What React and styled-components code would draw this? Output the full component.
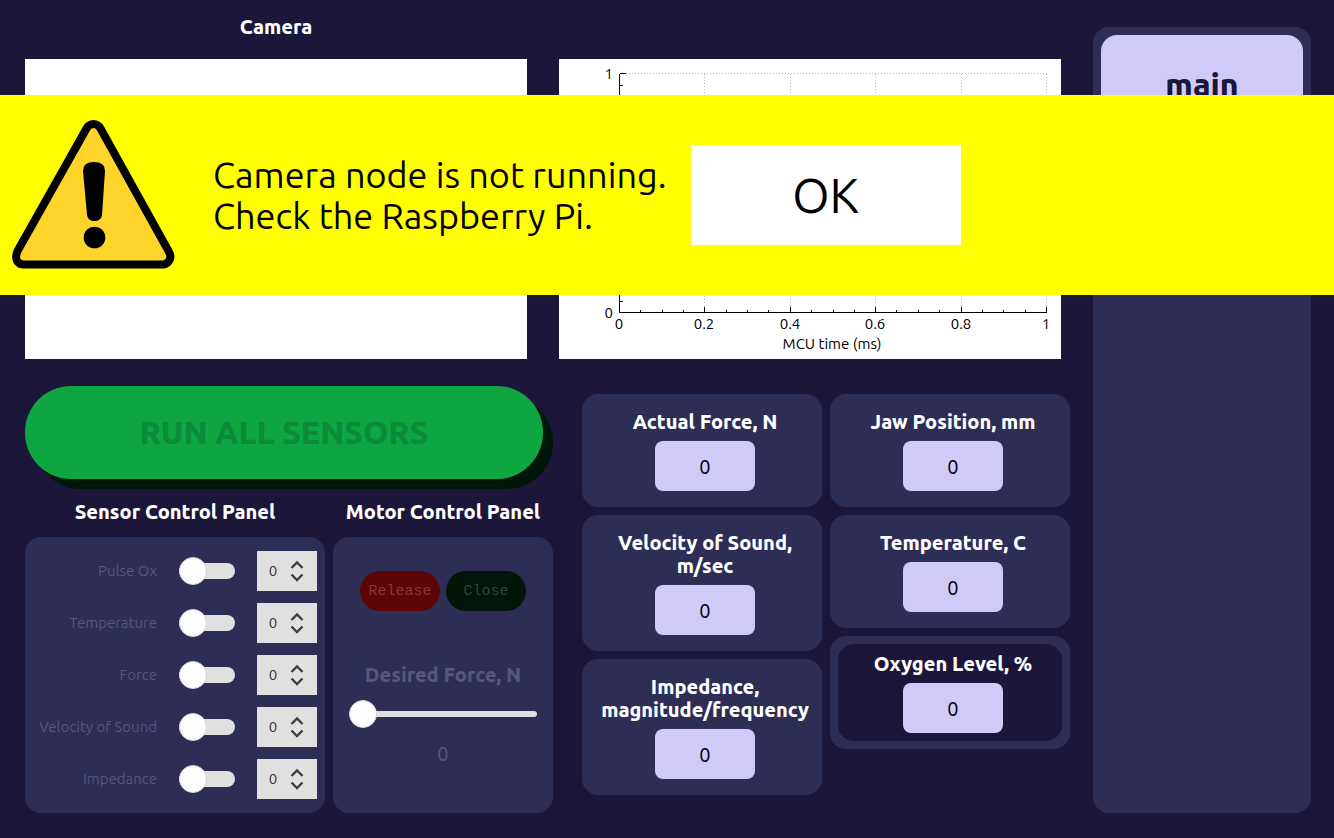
import React from "react";
import styled, { createGlobalStyle } from "styled-components";

const night = "#1c163a";
const panel = "#2e2d56";
const lavender = "#d0caf8";
const muted = "#57567b";
const track = "#e0e0e0";

const regular = 400;
const bold = 800;

const GlobalStyle = createGlobalStyle`
  *, *::before, *::after { box-sizing: border-box; }
  body {
    margin: 0;
    background: ${night};
    color: #fff;
    font-family: "Ubuntu", "Noto Sans", sans-serif;
    font-weight: ${regular};
  }
  button, input, output { font-family: inherit; font-weight: inherit; }
`;

const Page = styled.div`
  position: relative;
  display: flex;
  gap: 23px;
  min-height: 100vh;
  padding: 0 23px 25px 25px;
`;

const Main = styled.main`
  flex: 1;
  min-width: 0;
  padding-top: 15px;
`;

const Views = styled.section`
  display: grid;
  grid-template-columns: 1fr 1fr;
  column-gap: 32px;
  padding-right: 9px;
`;

const View = styled.div`
  display: flex;
  flex-direction: column;
  gap: 21px;
`;

const Heading = styled.h2`
  margin: 0;
  min-height: 23px;
  font-size: 20px;
  line-height: 23px;
  font-weight: ${bold};
  text-align: center;
  color: ${(p) => (p.$muted ? muted : "#fff")};
`;

const Screen = styled.div`
  height: 300px;
  background: #fff;
`;

const Chart = styled.svg`
  display: block;
  width: 100%;
  height: 300px;
  font-size: 15px;
`;

const Lower = styled.section`
  display: grid;
  grid-template-columns: 528fr 488fr;
  column-gap: 29px;
  margin-top: 27px;
`;

const Controls = styled.div`
  display: flex;
  flex-direction: column;
  gap: 21px;
`;

const RunButton = styled.button`
  height: 93px;
  margin-right: 10px;
  padding: 0 0 2px;
  border: 0;
  border-radius: 46px;
  background: #0ea542;
  box-shadow: 10px 10px 0 #001608;
  color: #0b8a3a;
  font-size: 32px;
  font-weight: ${bold};
`;

const Panels = styled.div`
  display: grid;
  grid-template-columns: 300fr 220fr;
  column-gap: 8px;
`;

const PanelColumn = styled.section`
  display: flex;
  flex-direction: column;
  gap: 14px;
`;

const Panel = styled.div`
  display: flex;
  flex-direction: column;
  flex: 1;
  border-radius: 16px;
  background: ${panel};
`;

const SensorPanel = styled(Panel)`
  gap: 12px;
  padding: 14px 8px;
`;

const SensorRow = styled.div`
  display: flex;
  align-items: center;
  gap: 22px;
  height: 40px;
`;

const SensorLabel = styled.label`
  flex: 1;
  font-size: 15px;
  line-height: 20px;
  text-align: right;
  white-space: nowrap;
  color: ${muted};
`;

const Switch = styled.input`
  appearance: none;
  position: relative;
  width: 56px;
  height: 16px;
  margin: 0;
  border-radius: 8px;
  background: ${track};

  &::before {
    content: "";
    position: absolute;
    top: -6px;
    left: 0;
    width: 28px;
    height: 28px;
    border: 1px solid #d4d4d8;
    border-radius: 50%;
    background: #fdfdfd;
  }
`;

const SpinBox = styled.div`
  display: flex;
  width: 60px;
  height: 40px;
  background: ${track};
`;

const SpinInput = styled.input`
  appearance: textfield;
  width: 32px;
  padding: 0 0 2px;
  border: 0;
  background: transparent;
  color: #353637;
  font-size: 15px;
  text-align: center;

  &::-webkit-inner-spin-button { appearance: none; margin: 0; }
`;

const SpinSteps = styled.div`
  display: flex;
  flex-direction: column;
  justify-content: center;
  gap: 2px;
`;

const StepButton = styled.button`
  display: grid;
  place-items: center;
  width: 16px;
  height: 10px;
  padding: 0;
  border: 0;
  background: transparent;
`;

const MotorPanel = styled(Panel)`
  align-items: center;
  padding: 34px 16px;
`;

const MotorButtons = styled.div`
  display: flex;
  gap: 6px;
  margin-bottom: 52px;
`;

const MotorButton = styled.button`
  width: 80px;
  height: 40px;
  padding: 0;
  border: 0;
  border-radius: 20px;
  background: ${(p) => (p.$danger ? "#5c0605" : "#001608")};
  color: ${(p) => (p.$danger ? "#853836" : "#33453a")};
  font-family: "Liberation Mono", monospace;
  font-size: 15px;
`;

const ForceSlider = styled.input`
  appearance: none;
  width: 100%;
  height: 28px;
  margin: 14px 0;
  background: transparent;

  &::-webkit-slider-runnable-track {
    height: 6px;
    border-radius: 3px;
    background: ${track};
  }

  &::-webkit-slider-thumb {
    appearance: none;
    width: 28px;
    height: 28px;
    margin-top: -11px;
    border: 1px solid #d4d4d8;
    border-radius: 50%;
    background: #fdfdfd;
  }
`;

const ForceValue = styled.output`
  font-size: 20px;
  line-height: 23px;
  color: ${muted};
`;

const Readings = styled.div`
  display: grid;
  grid-template-columns: 1fr 1fr;
  column-gap: 8px;
  padding-top: 8px;
`;

const ReadingColumn = styled.div`
  display: flex;
  flex-direction: column;
  gap: 8px;
`;

const Card = styled.div`
  padding: 8px;
  border-radius: 16px;
  background: ${panel};
`;

const CardBody = styled.div`
  display: flex;
  flex-direction: column;
  align-items: center;
  gap: 8px;
  padding: 8px 2px 8px 8px;
  border-radius: 16px;
  background: ${(p) => (p.$dark ? night : "transparent")};
`;

const CardValue = styled.output`
  width: 100px;
  padding-top: 2px;
  border-radius: 8px;
  background: ${lavender};
  color: #000;
  font-size: 20px;
  line-height: 48px;
  text-align: center;
`;

const Sidebar = styled.nav`
  width: 218px;
  margin-top: 27px;
  padding: 8px;
  border-radius: 16px;
  background: ${panel};
`;

const TabButton = styled.button`
  width: 100%;
  height: 100px;
  padding: 0 0 2px;
  border: 0;
  border-radius: 16px;
  background: ${lavender};
  color: ${night};
  font-size: 32px;
  font-weight: ${bold};
`;

const Alert = styled.div`
  position: absolute;
  top: 95px;
  left: 0;
  right: 0;
  display: flex;
  align-items: center;
  height: 200px;
  background: #ff0;
  color: #000;
`;

const AlertText = styled.p`
  margin: 0 24px 0 23px;
  font-size: 36px;
  line-height: 41px;
  white-space: pre-line;
`;

const AlertButton = styled.button`
  width: 270px;
  height: 100px;
  border: 0;
  background: #fff;
  color: #000;
  font-size: 48px;
`;

const sensors = ["Pulse Ox", "Temperature", "Force", "Velocity of Sound", "Impedance"];

const readings = [
  [{ lines: ["Actual Force, N"] }, { lines: ["Velocity of Sound,", "m/sec"] }, { lines: ["Impedance,", "magnitude/frequency"] }],
  [{ lines: ["Jaw Position, mm"] }, { lines: ["Temperature, C"] }, { lines: ["Oxygen Level, %"], dark: true }],
];

const xMajor = [60, 145, 231, 316, 402, 487];
const xLabels = ["0", "0.2", "0.4", "0.6", "0.8", "1"];
const xMinor = [81, 103, 124, 167, 188, 209, 252, 274, 295, 337, 359, 380, 423, 444, 466];
const yMajor = [14, 62, 110, 157, 205, 253];
const yMinor = Array.from({ length: 19 }, (_, i) => 14 + (i + 1) * 12);

function ForceChart() {
  return (
    <Chart viewBox="0 0 502 300" role="img" aria-label="MCU time (ms)">
      <g shapeRendering="crispEdges" transform="translate(0.5 0.5)" fill="none">
        <g stroke="#b8b8b8" strokeDasharray="1 2">
          {xMajor.slice(1).map((x) => <line key={x} x1={x} x2={x} y1="14" y2="253" />)}
          {yMajor.slice(0, 5).map((y) => <line key={y} x1="60" x2="487" y1={y} y2={y} />)}
        </g>
        <g stroke="#000">
          <path d="M60 14V253H487.5" />
          {xMajor.map((x) => <path key={x} d={`M${x} 253v-6`} />)}
          {xMinor.map((x) => <path key={x} d={`M${x} 253v-3`} />)}
          {yMajor.map((y) => <path key={y} d={`M60 ${y}h6`} />)}
          {yMinor.map((y) => <path key={y} d={`M60 ${y}h3`} />)}
        </g>
      </g>
      <text x="54" y="20" textAnchor="end">1</text>
      <text x="54" y="259" textAnchor="end">0</text>
      {xMajor.map((x, i) => (
        <text key={x} x={x} y="270" textAnchor="middle">{xLabels[i]}</text>
      ))}
      <text x="273" y="290" textAnchor="middle">MCU time (ms)</text>
    </Chart>
  );
}

function WarningIcon() {
  return (
    <svg width="190" height="200" viewBox="0 0 190 200" aria-hidden="true">
      <path
        d="M86.5 33.5Q89 29 93.500 29T100.500 33.500L168.500 156Q172 162 169 166T162 169.500H24Q19 169.500 17 166T17.500 156Z"
        fill="#ffd42a"
        stroke="#000"
        strokeWidth="8"
      />
      <path d="M83 76Q83 67 94 67T105 76L102 120Q101 126 94.500 126T87 120Z" />
      <circle cx="94.500" cy="142.500" r="10.800" />
    </svg>
  );
}

function Spinner({ name }) {
  return (
    <SpinBox>
      <SpinInput type="number" defaultValue={0} disabled aria-label={`${name} rate`} />
      <SpinSteps>
        <StepButton disabled aria-label="Increase">
          <svg width="14" height="10" fill="none" stroke="#3c3d3e" strokeWidth="2.300">
            <path d="M1.500 8L7 2.500L12.500 8" />
          </svg>
        </StepButton>
        <StepButton disabled aria-label="Decrease">
          <svg width="14" height="10" fill="none" stroke="#3c3d3e" strokeWidth="2.300">
            <path d="M1.500 2.500L7 8L12.500 2.500" />
          </svg>
        </StepButton>
      </SpinSteps>
    </SpinBox>
  );
}

export default function App() {
  return (
    <>
      <GlobalStyle />
      <Page>
        <Main>
          <Views>
            <View>
              <Heading>Camera</Heading>
              <Screen />
            </View>
            <View>
              <Heading as="div" />
              <Screen><ForceChart /></Screen>
            </View>
          </Views>
          <Lower>
            <Controls>
              <RunButton disabled>RUN ALL SENSORS</RunButton>
              <Panels>
                <PanelColumn>
                  <Heading>Sensor Control Panel</Heading>
                  <SensorPanel>
                    {sensors.map((name, i) => (
                      <SensorRow key={name}>
                        <SensorLabel htmlFor={`sensor-${i}`}>{name}</SensorLabel>
                        <Switch id={`sensor-${i}`} type="checkbox" disabled />
                        <Spinner name={name} />
                      </SensorRow>
                    ))}
                  </SensorPanel>
                </PanelColumn>
                <PanelColumn>
                  <Heading>Motor Control Panel</Heading>
                  <MotorPanel>
                    <MotorButtons>
                      <MotorButton $danger disabled>Release</MotorButton>
                      <MotorButton disabled>Close</MotorButton>
                    </MotorButtons>
                    <Heading as="label" htmlFor="force" $muted>Desired Force, N</Heading>
                    <ForceSlider id="force" type="range" min="0" max="10" defaultValue="0" disabled />
                    <ForceValue htmlFor="force">0</ForceValue>
                  </MotorPanel>
                </PanelColumn>
              </Panels>
            </Controls>
            <Readings>
              {readings.map((column, i) => (
                <ReadingColumn key={i}>
                  {column.map(({ lines, dark }) => (
                    <Card key={lines[0]}>
                      <CardBody $dark={dark}>
                        <Heading>
                          {lines.map((line) => <div key={line}>{line}</div>)}
                        </Heading>
                        <CardValue>0</CardValue>
                      </CardBody>
                    </Card>
                  ))}
                </ReadingColumn>
              ))}
            </Readings>
          </Lower>
        </Main>
        <Sidebar>
          <TabButton>main</TabButton>
        </Sidebar>
        <Alert role="alert">
          <WarningIcon />
          <AlertText>{"Camera node is not running.\nCheck the Raspberry Pi."}</AlertText>
          <AlertButton>OK</AlertButton>
        </Alert>
      </Page>
    </>
  );
}
